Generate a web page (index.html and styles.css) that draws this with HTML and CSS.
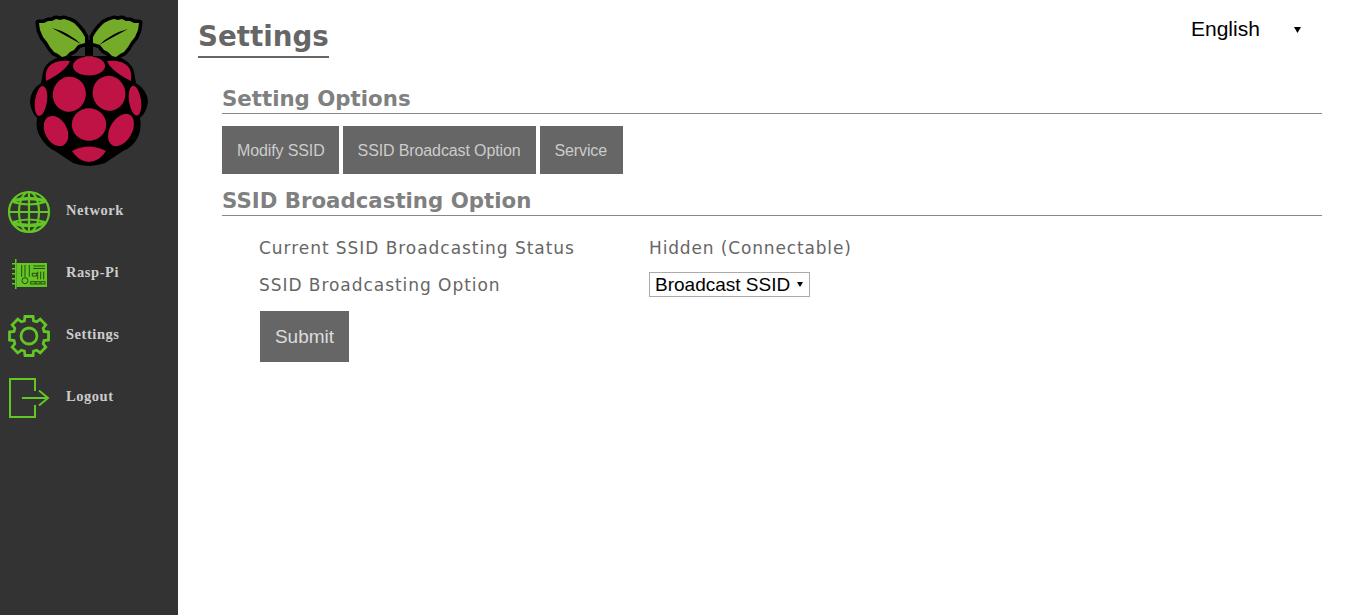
FILE: index.html
```html
<!DOCTYPE html>
<html lang="en">
<head>
<meta charset="utf-8">
<title>Settings</title>
<link rel="stylesheet" href="styles.css">
</head>
<body>
<div class="app">
  <aside class="sidebar">
    <div class="logo">
      <svg width="178" height="179" viewBox="0 0 178 179">
        <defs>
          <g id="leaves">
            <path d="M39 23 44 23 48 21 52 21 56 19 60 20 64 19 69 20.500 74 23 78 27 82 32 85 37 85 43 78 45 74 50 70 52 66 56 62 57 58 54 54 52 50 47 47 42 43 37 40 30Z"/>
            <path d="M139 23 134 23 130 21 126 21 122 19 118 20 114 19 109 20.500 104 23 100 27 96 32 93 37 93 43 100 45 104 50 108 52 112 56 116 57 120 54 124 52 128 47 131 42 135 37 138 30Z"/>
          </g>
          <g id="berries">
            <ellipse cx="89" cy="66" rx="16" ry="9.500"/>
            <path d="M46 81Q44 66 56 62 63 60 70 61 66 71 46 81Z"/>
            <path d="M131 81Q133 66 121 62 114 60 107 61 111 71 131 81Z"/>
            <ellipse cx="69.300" cy="94.200" rx="16.500" ry="17.600" transform="rotate(15 69.300 94.200)"/>
            <ellipse cx="109" cy="93.300" rx="16.300" ry="17.500" transform="rotate(-15 109 93.300)"/>
            <ellipse cx="41" cy="101" rx="6" ry="15" transform="rotate(8 41 101)"/>
            <ellipse cx="135" cy="100.700" rx="6" ry="15" transform="rotate(-8 135 100.700)"/>
            <ellipse cx="89" cy="124.500" rx="17.200" ry="16.200"/>
            <ellipse cx="56" cy="131" rx="11" ry="16" transform="rotate(-28 56 131)"/>
            <ellipse cx="121" cy="130" rx="11" ry="17.500" transform="rotate(30 121 130)"/>
            <path d="M72 151Q89 142 106 151 100 161 89 162 78 161 72 151Z"/>
          </g>
        </defs>
        <use href="#leaves" fill="#000" stroke="#000" stroke-width="7" stroke-linejoin="round"/>
        <path fill="#000" d="M85 40H93V58H85ZM63 56Q46 60 43 72L41 83Q30 90 30 102 31 112 37 118 35 130 41 138 46 147 55 151L73 163Q81 166 89 166 97 166 105 163L123 151Q133 147 138 137 142 128 140 118 147 112 148 101 147 90 136 83L134 72Q131 60 115 56Z"/>
        <use href="#leaves" fill="#74ab28"/>
        <path fill="#000" d="M52 28Q68 32 81 44 68 37 52 28Z"/>
        <path fill="#000" d="M128 29Q112 33 99 45 113 37 128 29Z"/>
        <use href="#berries" fill="#bf1346"/>
      </svg>
    </div>
    <nav class="nav">
      <a class="nav-item">
        <span class="nav-icon">
          <svg width="44" height="44" viewBox="0 0 44 44" fill="none" stroke="#63c625" stroke-width="2.200">
            <circle cx="22" cy="22" r="20"/>
            <ellipse cx="22" cy="22" rx="10" ry="20"/>
            <path d="M22 2V42M2 22H42"/>
            <path d="M5.500 11Q22 6 38.500 11" stroke-width="3.500"/>
            <path d="M5.500 33Q22 38 38.500 33" stroke-width="3.500"/>
            <path d="M6 12Q22 17 38 12M6 32Q22 27 38 32"/>
          </svg>
        </span>
        <span class="nav-label">Network</span>
      </a>
      <a class="nav-item">
        <span class="nav-icon">
          <svg width="44" height="36" viewBox="0 0 44 36">
            <path d="M8 3H9.500V33H8ZM5 7H8V8.500H5ZM5 12H8V13.500H5ZM5 17H8V18.500H5ZM5 22H8V23.500H5ZM5 27H8V28.500H5Z" fill="#63c625"/>
            <rect x="9.500" y="7" width="30.500" height="24" fill="#63c625"/>
            <g fill="none" stroke="#2c4a12" stroke-width="1">
              <path d="M14.700 9V20.700M18 9V20.700M22.300 9V20.700M26.300 10H38M26.300 12.500H38"/>
              <rect x="25.300" y="17.300" width="4.400" height="2.700"/>
              <circle cx="18" cy="24.700" r="3"/>
              <rect x="23.700" y="25.700" width="4.300" height="2.300"/>
              <rect x="29" y="25.700" width="4" height="2.300"/>
              <rect x="34" y="25.700" width="4" height="2.300"/>
              <path d="M30.700 15.700V23.300M33.700 15.700V23.300M36.700 15.700V23.300"/>
            </g>
          </svg>
        </span>
        <span class="nav-label">Rasp-Pi</span>
      </a>
      <a class="nav-item">
        <span class="nav-icon">
          <svg width="44" height="44" viewBox="0 0 44 44" fill="none" stroke="#63c625" stroke-width="2.800">
            <g transform="translate(22 22)">
              <circle r="8"/>
              <path d="M-4-19.500H4L4.600-15 7.710-14.210 11.200-16.800 16.800-11.200 14.210-7.710 15-4.600 19.500-4V4L15 4.600 14.210 7.710 16.800 11.200 11.200 16.800 7.710 14.210 4.600 15 4 19.500H-4L-4.600 15-7.710 14.210-11.200 16.800-16.800 11.200-14.210 7.710-15 4.600-19.500 4V-4L-15-4.600-14.210-7.710-16.800-11.200-11.200-16.800-7.710-14.210-4.600-15Z"/>
            </g>
          </svg>
        </span>
        <span class="nav-label">Settings</span>
      </a>
      <a class="nav-item">
        <span class="nav-icon">
          <svg width="44" height="44" viewBox="0 0 44 44" fill="none" stroke="#63c625" stroke-width="2">
            <path d="M28 15V3H3V41H28V29"/>
            <path d="M15 22H41M32 14.500 41 22 32 29.500"/>
          </svg>
        </span>
        <span class="nav-label">Logout</span>
      </a>
    </nav>
  </aside>
  <main class="main">
    <header class="top">
      <h1 class="title">Settings</h1>
      <div class="lang">
        <select class="lang-select"><option>English</option></select>
        <svg class="caret" width="7" height="6" viewBox="0 0 7 6"><path d="M0 0H7L3.500 6Z"/></svg>
      </div>
    </header>
    <section class="content">
      <h2 class="section-title">Setting Options</h2>
      <div class="tabs">
        <button class="btn">Modify SSID</button>
        <button class="btn">SSID Broadcast Option</button>
        <button class="btn">Service</button>
      </div>
      <h2 class="section-title second">SSID Broadcasting Option</h2>
      <div class="form">
        <div class="row"><span class="label">Current SSID Broadcasting Status</span><span class="value">Hidden (Connectable)</span></div>
        <div class="row"><span class="label">SSID Broadcasting Option</span>
          <div class="ssid-wrap">
            <select class="ssid-select"><option>Broadcast SSID</option></select>
            <svg class="caret small" width="6" height="5" viewBox="0 0 6 5"><path d="M0 0H6L3 5Z"/></svg>
          </div>
        </div>
        <button class="submit">Submit</button>
      </div>
    </section>
  </main>
</div>
</body>
</html>
```
FILE: styles.css
```css
* { box-sizing: border-box; }
html, body { margin: 0; height: 100%; background: #fff; overflow: hidden; }
.app { display: flex; height: 615px; }
.sidebar { width: 178px; flex: none; background: #333; }
.logo { height: 179px; }
.logo svg { display: block; }
.nav { display: flex; flex-direction: column; }
.nav-item { display: flex; align-items: center; height: 62px; }
.nav-icon { width: 66px; padding: 4px 0 0 7px; display: flex; align-items: center; }
.nav-icon svg { display: block; }
.nav-label { font: bold 14.500px "Liberation Serif", serif; letter-spacing: .55px; color: #ccc; }
.main { flex: 1; padding: 0 44px 0 20px; font-family: "DejaVu Sans", sans-serif; }
.top { display: flex; justify-content: space-between; align-items: flex-start; height: 81px; }
.title { margin: 17px 0 0; font-size: 27.700px; line-height: 39px; font-weight: bold; color: #666; border-bottom: 2px solid #666; }
.lang { position: relative; width: 118px; margin: 14px 13px 0 0; }
.lang-select { appearance: none; border: 0; background: none; padding: 0; font: 21px/30px "Liberation Sans", sans-serif; color: #000; width: 100%; }
.caret { position: absolute; right: 8px; top: 13px; fill: #000; }
.content { padding-left: 24px; }
.section-title { margin: 0; padding-top: 4px; font-size: 21.300px; line-height: 28px; font-weight: bold; color: #808080; border-bottom: 1px solid #888; }
.tabs { display: flex; gap: 4px; margin: 12px 0 9px; }
.btn { height: 48px; padding: 1px 15px 0; border: 0; background: #666; color: #ccc; font: 16px "Liberation Sans", sans-serif; letter-spacing: -.12px; }
.btn:first-child { padding-right: 14px; }
.btn:last-child { padding-right: 16px; }
.form { padding-left: 37px; padding-top: 13px; }
.row { display: flex; align-items: center; height: 37px; font-size: 17px; letter-spacing: .85px; color: #666; }
.label { width: 390px; flex: none; letter-spacing: .95px; }
.ssid-wrap { position: relative; width: 161px; height: 25px; }
.ssid-select { appearance: none; width: 100%; height: 25px; padding: 0 0 0 5px; border: 1px solid #aaa; background: #fff; color: #000; font: 19px "Liberation Sans", sans-serif; border-radius: 0; }
.caret.small { right: 7px; top: 10px; }
.submit { display: block; margin: 8px 0 0 1px; width: 89px; height: 51px; border: 0; background: #666; color: #ddd; font: 19px "Liberation Sans", sans-serif; }
```
